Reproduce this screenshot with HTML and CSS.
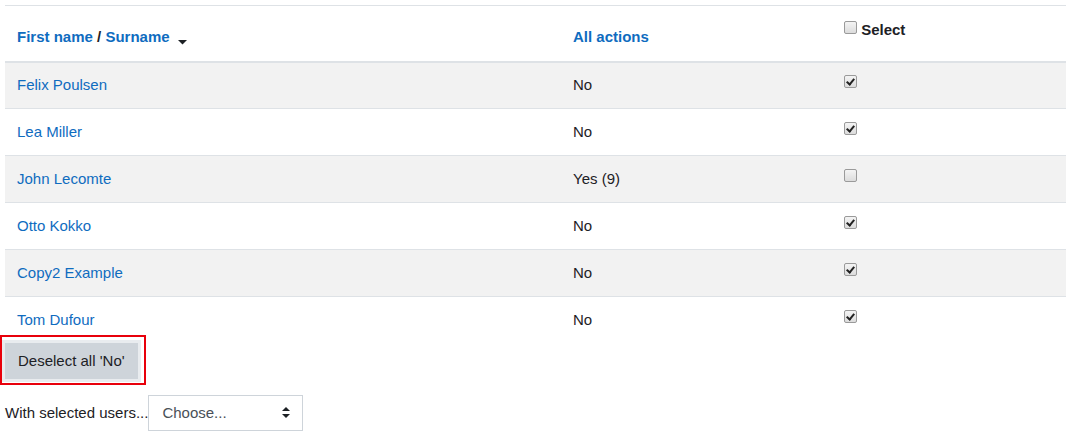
FILE: index.html
```html
<!DOCTYPE html>
<html lang="en">
<head>
    <meta charset="UTF-8">
    <title>Participants</title>
    <link rel="stylesheet" href="styles.css">
</head>
<body>
    <table class="users">
        <thead>
            <tr>
                <th class="col-name"><a href="#">First name</a> / <a href="#">Surname</a>
                    <svg class="sort" width="9" height="5" viewBox="0 0 9 5"><path d="M0 0h9L4.5 4.5z" fill="#1d2125"/></svg>
                </th>
                <th class="col-actions"><a href="#">All actions</a></th>
                <th class="col-select"><span class="cb"></span> Select</th>
            </tr>
        </thead>
        <tbody>
            <tr><td><a href="#">Felix Poulsen</a></td><td>No</td><td><span class="cb on"></span></td></tr>
            <tr><td><a href="#">Lea Miller</a></td><td>No</td><td><span class="cb on"></span></td></tr>
            <tr><td><a href="#">John Lecomte</a></td><td>Yes (9)</td><td><span class="cb"></span></td></tr>
            <tr><td><a href="#">Otto Kokko</a></td><td>No</td><td><span class="cb on"></span></td></tr>
            <tr><td><a href="#">Copy2 Example</a></td><td>No</td><td><span class="cb on"></span></td></tr>
            <tr><td><a href="#">Tom Dufour</a></td><td>No</td><td><span class="cb on"></span></td></tr>
        </tbody>
    </table>
    <div class="highlight">
        <button class="btn">Deselect all 'No'</button>
    </div>
    <div class="bulk">
        <span>With selected users...</span>
        <div class="select">
            <span>Choose...</span>
            <svg width="8" height="11" viewBox="0 0 8 11"><path d="M0 4L4 0L8 4z M0 7L4 11L8 7z" fill="#1d2125"/></svg>
        </div>
    </div>
</body>
</html>
```

FILE: styles.css
```css
body {
    margin: 0;
    padding: 5px 0 0;
    font-family: "Liberation Sans", Arial, sans-serif;
    font-size: 15px;
    color: #1d2125;
    background: #fff;
}
a {
    color: #0f6cbf;
    text-decoration: none;
}
.users {
    margin-left: 5px;
    width: 1061px;
    border-collapse: collapse;
    table-layout: fixed;
    line-height: 22px;
}
.users th,
.users td {
    padding: 0 12px;
    text-align: left;
    border-top: 1px solid #dee2e6;
}
.users thead th {
    font-weight: bold;
    vertical-align: bottom;
    height: 56px;
    padding-bottom: 13px;
    box-sizing: border-box;
    border-bottom: 2px solid #dee2e6;
}
.users thead th.col-select {
    vertical-align: top;
    padding-top: 13px;
}
.col-name { width: 556px; }
.col-actions { width: 271px; }
.users td {
    height: 47px;
    box-sizing: border-box;
    vertical-align: middle;
}
.users tbody tr:nth-child(odd) {
    background: #f2f2f2;
}
.sort {
    margin-left: 4px;
    vertical-align: -3px;
}
.cb {
    display: inline-block;
    width: 13px;
    height: 13px;
    box-sizing: border-box;
    border: 1px solid #9a9a9a;
    border-radius: 2px;
    background: linear-gradient(#f4f4f4, #dcdcdc);
    vertical-align: 1px;
    position: relative;
}
.users td .cb {
    vertical-align: 2px;
}
.cb.on::after {
    content: "";
    position: absolute;
    left: 3px;
    top: 1px;
    width: 3px;
    height: 6px;
    border: solid #222;
    border-width: 0 2px 2px 0;
    transform: rotate(40deg);
}
.highlight {
    display: inline-block;
    margin-top: -9px;
    border: 2px solid #e8000b;
}
.btn {
    display: block;
    font-family: inherit;
    font-size: 15px;
    color: #1d2125;
    background: #ced4da;
    border: 0;
    box-shadow: 0 0 0 3px #e9ecef;
    margin: 6px 6px 4px 3px;
    padding: 0 13px;
    height: 36px;
    line-height: 36px;
}
.bulk {
    display: flex;
    align-items: center;
    margin: 10px 0 0 5px;
}
.select {
    display: flex;
    align-items: center;
    justify-content: space-between;
    width: 155px;
    height: 36px;
    box-sizing: border-box;
    border: 1px solid #ced4da;
    padding: 0 12px 0 13px;
    color: #495057;
}
```
